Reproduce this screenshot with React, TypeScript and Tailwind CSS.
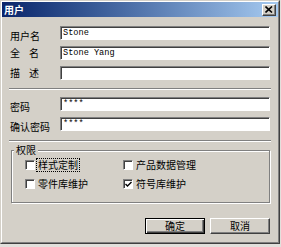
import React from "react";

const cjk = "font-['Noto_Sans_CJK_SC','Noto_Sans',sans-serif]";

const Field = ({ label, value, spread }: { label: string; value?: string; spread?: boolean }) => (
  <div className="flex items-center h-[14px]">
    <div className="w-[51px] pl-[1px]">
      {spread ? (
        <span className="flex justify-between w-[29px] text-[10px] leading-[14px] text-black">
          <span>{label[0]}</span>
          <span>{label[1]}</span>
        </span>
      ) : (
        <span className="text-[10px] leading-[14px] text-black">{label}</span>
      )}
    </div>
    <div className="w-[210px] h-[14px] bg-white border border-t-[#808080] border-l-[#808080] border-b-white border-r-white shadow-[inset_1px_1px_0_#404040] pl-[2px] flex items-center">
      <span className="font-['Liberation_Mono',monospace] text-[8.6px] leading-none text-black">
        {value}
      </span>
    </div>
  </div>
);

const Separator = ({ className }: { className: string }) => (
  <div className={`h-[2px] border-t border-t-[#808080] border-b border-b-white ${className}`} />
);

const Check = ({ label, checked, focus }: { label: string; checked?: boolean; focus?: boolean }) => (
  <div className="flex items-center h-[14px]">
    <div className="w-[10px] h-[10px] bg-white border border-t-[#808080] border-l-[#808080] border-b-white border-r-white shadow-[inset_1px_1px_0_#404040] flex items-center justify-center">
      {checked && (
        <svg width="7" height="7" viewBox="0 0 7 7">
          <path d="M0.5 3 L2.5 5 L6.5 1" stroke="black" strokeWidth="1.4" fill="none" />
        </svg>
      )}
    </div>
    <span
      className={`ml-[1px] px-[1px] text-[10px] leading-[12px] border ${
        focus ? "border-dotted border-black" : "border-transparent"
      }`}
    >
      {label}
    </span>
  </div>
);

export default function App() {
  return (
    <div className={`w-[281px] h-[247px] bg-[#e2e0dc] ${cjk}`}>
      <div className="w-[280px] h-[244px] border border-t-[#d4d0c8] border-l-[#d4d0c8] border-r-[#404040] border-b-[#404040]">
        <div className="h-full flex flex-col bg-[#d4d0c8] border border-t-white border-l-white border-r-[#808080] border-b-[#808080]">
          <div className="h-[15px] flex items-center justify-between bg-linear-to-r from-[#0a246a] to-[#a6caf0] pl-[2px] pr-[2px]">
            <span className="text-[10px] font-bold text-white leading-none">用户</span>
            <div className="w-[14px] h-[12px] bg-[#d4d0c8] border border-t-white border-l-white border-r-[#404040] border-b-[#404040] shadow-[inset_-1px_-1px_0_#808080] flex items-center justify-center">
              <svg width="8" height="7" viewBox="0 0 8 7">
                <path d="M0.5 0.5 L7 6.5 M7 0.5 L0.5 6.5" stroke="black" strokeWidth="1.6" />
              </svg>
            </div>
          </div>

          <div className="flex flex-col pl-[7px] pr-[7px] pt-[9px]">
            <div className="flex flex-col gap-[6px]">
              <Field label="用户名" value="Stone" />
              <Field label="全名" value="Stone Yang" spread />
              <Field label="描述" spread />
            </div>
            <Separator className="mt-[8px]" />
            <div className="flex flex-col gap-[6px] mt-[7px]">
              <Field label="密码" value="****" />
              <Field label="确认密码" value="****" />
            </div>
            <Separator className="mt-[9px]" />

            <div className="relative mt-[8px] ml-[2px] mr-[1px] h-[53px] border border-[#808080] shadow-[inset_1px_1px_0_#fff,1px_1px_0_#fff]">
              <span className="absolute left-[2px] top-[-7px] px-[2px] bg-[#d4d0c8] text-[10px] leading-[12px]">
                权限
              </span>
              <div className="grid grid-cols-[98px_1fr] gap-y-[5px] pl-[13px] pt-[7px]">
                <Check label="样式定制" focus />
                <Check label="产品数据管理" />
                <Check label="零件库维护" />
                <Check label="符号库维护" checked />
              </div>
            </div>

            <div className="flex justify-end gap-[5px] mt-[15px] mr-px">
              <button className="w-[60px] h-[16px] bg-[#d4d0c8] border border-black shadow-[inset_1px_1px_0_#fff,inset_-1px_-1px_0_#404040,inset_-2px_-2px_0_#808080] text-[10px] leading-none text-black flex items-center justify-center">
                确定
              </button>
              <button className="w-[60px] h-[16px] bg-[#d4d0c8] border border-t-white border-l-white border-r-[#404040] border-b-[#404040] shadow-[inset_-1px_-1px_0_#808080] text-[10px] leading-none text-black flex items-center justify-center">
                取消
              </button>
            </div>
          </div>
        </div>
      </div>
    </div>
  );
}
